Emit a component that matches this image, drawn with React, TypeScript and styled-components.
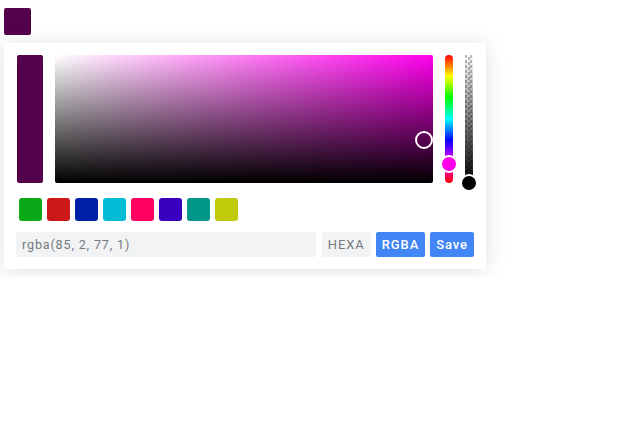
import styled, { createGlobalStyle } from 'styled-components';

const COLOR = 'rgba(85, 2, 77, 1)';
const HUE = 'rgb(255, 0, 236)';

const swatches = ['#0ba818', '#cc1818', '#0020a8', '#00bcd4', '#ff0060', '#3a00c0', '#009688', '#c0ca0a'];

const GlobalStyle = createGlobalStyle`
  body {
    margin: 0;
    background: #fff;
    font-family: Roboto, "Liberation Sans", Arial, sans-serif;
  }
`;

export default function App() {
  return (
    <SPage>
      <GlobalStyle />
      <STrigger />
      <SPanel>
        <SSelection>
          <SPreview />
          <SPalette>
            <SPalettePicker style={{ left: '97.6%', top: '66.7%' }} />
          </SPalette>
          <SSlider $kind="hue">
            <SSliderPicker $fill={HUE} style={{ top: '84.9%' }} />
          </SSlider>
          <SSlider $kind="alpha">
            <SSliderPicker $fill="#000" style={{ top: '100%' }} />
          </SSlider>
        </SSelection>
        <SSwatches>
          {swatches.map((c) => (
            <SSwatch key={c} $color={c} />
          ))}
        </SSwatches>
        <SInteraction>
          <SResult readOnly value={COLOR} />
          <SButton>HEXA</SButton>
          <SButton $active>RGBA</SButton>
          <SButton $active>Save</SButton>
        </SInteraction>
      </SPanel>
    </SPage>
  );
}

const SPage = styled.div`
  padding: 8px 4px;
  display: flex;
  flex-direction: column;
  align-items: flex-start;
  gap: 8px;
`;

const STrigger = styled.div`
  width: 27px;
  height: 27px;
  border-radius: 2px;
  background: ${COLOR};
`;

const SPanel = styled.div`
  width: 458px;
  padding: 12px;
  border-radius: 2px;
  background: #fff;
  box-shadow: 0 2px 24px 0 rgba(0, 0, 0, 0.1), 0 0 16px 0 rgba(0, 0, 0, 0.03);
`;

const SSelection = styled.div`
  display: flex;
  height: 128px;
  padding-left: 1px;
`;

const SPreview = styled.div`
  width: 26px;
  margin-right: 12px;
  border-radius: 2px;
  background: ${COLOR};
`;

const SPalette = styled.div`
  position: relative;
  width: 378px;
  margin-right: 12px;
  border-radius: 2px;
  background: linear-gradient(to top, #000, transparent), linear-gradient(to left, ${HUE}, #fff);
`;

const SPalettePicker = styled.div`
  position: absolute;
  width: 18px;
  height: 18px;
  box-sizing: border-box;
  border: 2px solid #fff;
  border-radius: 50%;
  transform: translate(-50%, -50%);
`;

const SSlider = styled.div<{ $kind: 'hue' | 'alpha' }>`
  position: relative;
  width: 8px;
  margin-right: ${(p) => (p.$kind === 'hue' ? '12px' : '0')};
  border-radius: ${(p) => (p.$kind === 'hue' ? '4px' : '0')};
  background: ${(p) =>
    p.$kind === 'hue'
      ? 'linear-gradient(to bottom, #f00, #ff0, #0f0, #0ff, #00f, #f0f, #f00)'
      : `linear-gradient(to bottom, transparent, #000),
         repeating-conic-gradient(#fff 0 25%, #bbb 0 50%) 0 0 / 5px 5px`};
`;

const SSliderPicker = styled.div<{ $fill: string }>`
  position: absolute;
  left: 50%;
  width: 18px;
  height: 18px;
  box-sizing: border-box;
  border: 2px solid #fff;
  border-radius: 50%;
  background: ${(p) => p.$fill};
  transform: translate(-50%, -50%);
`;

const SSwatches = styled.div`
  display: flex;
  gap: 5px;
  margin: 15px 0 0 3px;
`;

const SSwatch = styled.div<{ $color: string }>`
  width: 23px;
  height: 23px;
  border-radius: 3px;
  background: ${(p) => p.$color};
`;

const SInteraction = styled.div`
  display: flex;
  gap: 5px;
  margin-top: 11px;
  height: 25px;
`;

const SResult = styled.input`
  flex: 1;
  min-width: 0;
  margin-right: 1px;
  padding: 0 6px;
  border: none;
  border-radius: 2px;
  background: #f1f3f4;
  color: #75797e;
  font-family: Roboto, "Liberation Sans", Arial, sans-serif;
  font-size: 12.5px;
  letter-spacing: 0.07em;
  outline: none;
`;

const SButton = styled.div<{ $active?: boolean }>`
  display: flex;
  align-items: center;
  padding: 0 6px;
  border-radius: 2px;
  background: ${(p) => (p.$active ? '#4285f4' : '#f1f3f4')};
  color: ${(p) => (p.$active ? '#fff' : '#75797e')};
  font-size: 13px;
  font-weight: ${(p) => (p.$active ? 500 : 400)};
  letter-spacing: 0.07em;
`;
